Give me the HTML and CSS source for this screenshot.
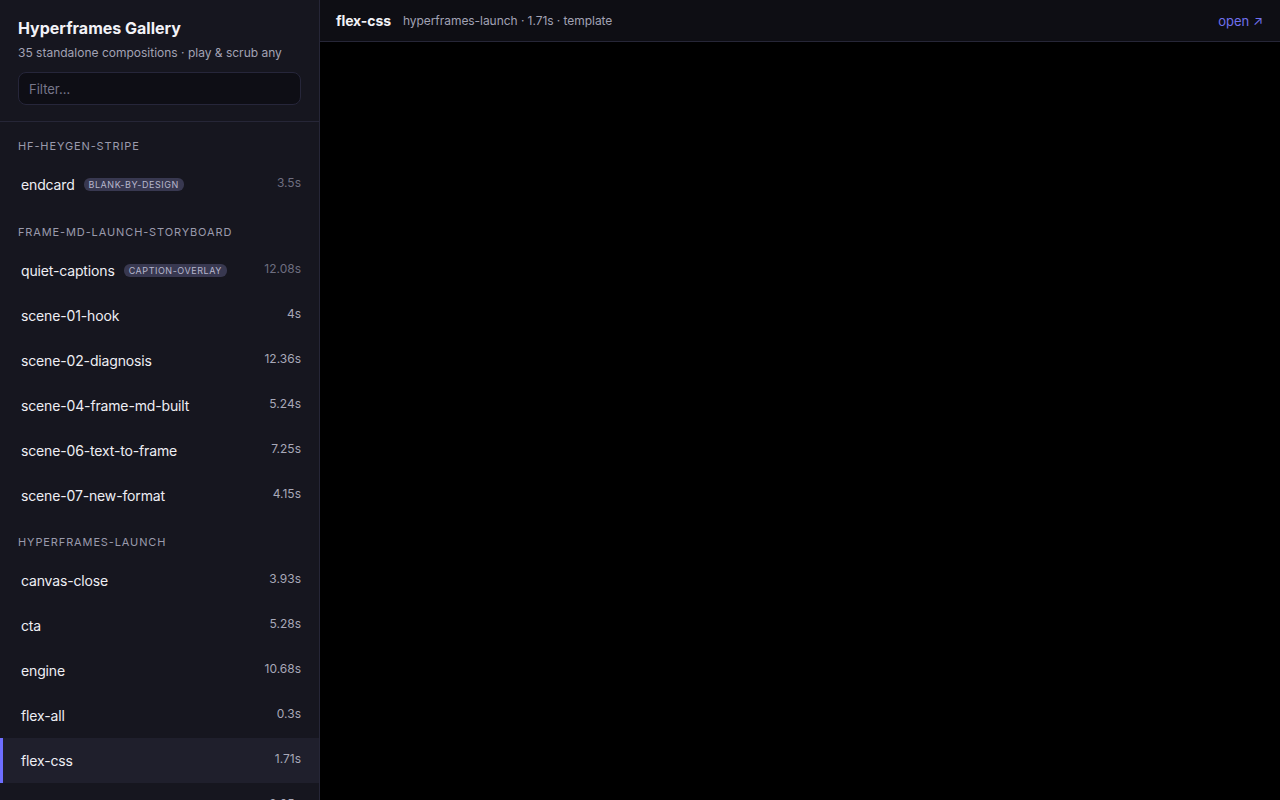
FILE: index.html
```html
<!DOCTYPE html>
<html lang="en">
<head>
    <meta charset="UTF-8">
    <meta name="viewport" content="width=device-width, initial-scale=1.0">
    <title>Hyperframes Gallery</title>
    <link rel="stylesheet" href="styles.css">
</head>
<body>
    <div class="app">
        <aside class="sidebar">
            <div class="sidebar-head">
                <h1>Hyperframes Gallery</h1>
                <p class="sub">35 standalone compositions · play &amp; scrub any</p>
                <input class="filter" type="text" placeholder="Filter…">
            </div>

            <div class="list">
                <div class="group">
                    <div class="group-label">hf-heygen-stripe</div>
                    <div class="row">
                        <span class="name">endcard <span class="tag">blank-by-design</span></span>
                        <span class="dur dim">3.5s</span>
                    </div>
                </div>

                <div class="group">
                    <div class="group-label">frame-md-launch-storyboard</div>
                    <div class="row">
                        <span class="name">quiet-captions <span class="tag">caption-overlay</span></span>
                        <span class="dur dim">12.08s</span>
                    </div>
                    <div class="row"><span class="name">scene-01-hook</span><span class="dur">4s</span></div>
                    <div class="row"><span class="name">scene-02-diagnosis</span><span class="dur">12.36s</span></div>
                    <div class="row"><span class="name">scene-04-frame-md-built</span><span class="dur">5.24s</span></div>
                    <div class="row"><span class="name">scene-06-text-to-frame</span><span class="dur">7.25s</span></div>
                    <div class="row"><span class="name">scene-07-new-format</span><span class="dur">4.15s</span></div>
                </div>

                <div class="group">
                    <div class="group-label">hyperframes-launch</div>
                    <div class="row"><span class="name">canvas-close</span><span class="dur">3.93s</span></div>
                    <div class="row"><span class="name">cta</span><span class="dur">5.28s</span></div>
                    <div class="row"><span class="name">engine</span><span class="dur">10.68s</span></div>
                    <div class="row"><span class="name">flex-all</span><span class="dur">0.3s</span></div>
                    <div class="row active"><span class="name">flex-css</span><span class="dur">1.71s</span></div>
                    <div class="row"><span class="name">flex-gsap</span><span class="dur">2.05s</span></div>
                    <div class="row"><span class="name">flex-tween</span><span class="dur">1.2s</span></div>
                </div>
            </div>
        </aside>

        <main class="main">
            <div class="topbar">
                <span class="title">flex-css</span>
                <span class="meta">hyperframes-launch · 1.71s · template</span>
                <a class="open" href="#">open ↗</a>
            </div>
            <div class="stage"></div>
        </main>
    </div>
</body>
</html>
```

FILE: styles.css
```css
* {
    box-sizing: border-box;
}

body {
    margin: 0;
    font-family: Inter, "Noto Sans", sans-serif;
    background-color: #000;
    color: #e8e8ef;
    overflow: hidden;
}

.app {
    display: flex;
    height: 100vh;
}

/* Sidebar */
.sidebar {
    width: 320px;
    flex-shrink: 0;
    background-color: #16161f;
    border-right: 1px solid #262637;
    display: flex;
    flex-direction: column;
    overflow: hidden;
}

.sidebar-head {
    padding: 18px 18px 16px;
    border-bottom: 1px solid #262637;
}

.sidebar-head h1 {
    margin: 0;
    font-size: 16px;
    line-height: 20px;
    font-weight: 700;
    color: #f2f2f7;
}

.sub {
    margin: 7px 0 11px;
    font-size: 12px;
    line-height: 16px;
    color: #a2a2b4;
}

.filter {
    display: block;
    width: 100%;
    height: 33px;
    padding: 0 10px;
    border: 1px solid #26263a;
    border-radius: 8px;
    background-color: #0e0e15;
    color: #e8e8ef;
    font-family: inherit;
    font-size: 13px;
}

.filter::placeholder {
    color: #77778a;
}

.filter:focus {
    outline: none;
    border-color: #6e6eff;
}

.list {
    flex: 1;
    overflow: hidden;
}

.group {
    padding-top: 17px;
}

.group + .group {
    padding-top: 17.5px;
}

.group-label {
    padding: 0 18px;
    margin-bottom: 9px;
    font-size: 11px;
    line-height: 14px;
    letter-spacing: 0.08em;
    text-transform: uppercase;
    color: #9a9aac;
}

.row {
    display: flex;
    justify-content: space-between;
    align-items: flex-start;
    height: 45px;
    padding: 12px 18px 12px 18px;
    border-left: 3px solid transparent;
    cursor: pointer;
}

.row:hover {
    background-color: #1b1b26;
}

.row.active {
    background-color: #1f1f2c;
    border-left-color: #6e6eff;
}

.name {
    font-size: 14px;
    line-height: 21px;
    letter-spacing: -0.15px;
    color: #eeeef4;
    display: flex;
    align-items: center;
}

.tag {
    margin-left: 9px;
    padding: 0 5px;
    height: 13px;
    border-radius: 6px;
    background-color: #383850;
    color: #b6b6cc;
    font-size: 9px;
    line-height: 13px;
    letter-spacing: 0.06em;
    text-transform: uppercase;
}

.dur {
    margin-top: 2px;
    font-size: 12px;
    line-height: 14px;
    color: #a8a8b8;
}

.dur.dim {
    color: #6e6e80;
}

/* Main */
.main {
    flex: 1;
    display: flex;
    flex-direction: column;
    min-width: 0;
}

.topbar {
    height: 42px;
    display: flex;
    align-items: center;
    padding: 0 16px;
    background-color: #0e0e14;
    border-bottom: 1px solid #262637;
}

.title {
    font-size: 14px;
    font-weight: 700;
    letter-spacing: -0.1px;
    color: #f2f2f7;
    margin-right: 12px;
}

.meta {
    font-size: 12px;
    letter-spacing: -0.05px;
    color: #a2a2b4;
}

.open {
    margin-left: auto;
    margin-right: 1px;
    font-size: 13px;
    color: #7070ee;
    text-decoration: none;
}

.stage {
    flex: 1;
    background-color: #000;
}
```
